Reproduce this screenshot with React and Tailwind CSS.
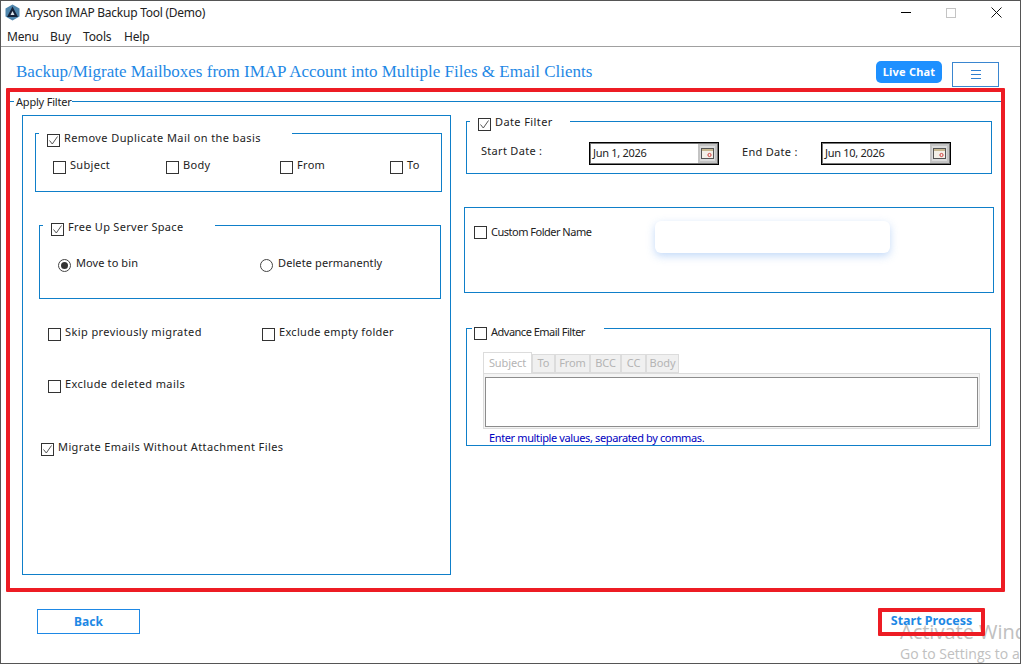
import React from "react";

const font = "font-['Noto_Sans','Open_Sans',sans-serif]";

const Box = ({ checked }) => (
  <span className="flex h-[13px] w-[13px] shrink-0 items-center justify-center border border-[#333] bg-white">
    {checked && (
      <svg width="11" height="11" viewBox="0 0 11 11" fill="none">
        <path d="M1.5 5.5 L4.3 9 L9.5 1.5" stroke="#555" strokeWidth="1" />
      </svg>
    )}
  </span>
);

const Check = ({ label, checked, className = "", labelClass = "tracking-[0.4px]" }) => (
  <div className={`flex h-[13px] items-center gap-[4px] ${className}`}>
    <Box checked={checked} />
    <span className={`mb-[6px] whitespace-nowrap text-[11px] leading-4 text-[#222] ${labelClass}`}>
      {label}
    </span>
  </div>
);

const Radio = ({ label, checked, className = "" }) => (
  <div className={`flex h-[13px] items-center gap-[5px] ${className}`}>
    <span className="flex h-[13px] w-[13px] shrink-0 items-center justify-center rounded-full border border-[#444]">
      {checked && <span className="h-[7px] w-[7px] rounded-full bg-[#333]" />}
    </span>
    <span className="mb-[6px] whitespace-nowrap text-[11px] leading-4 tracking-[0.1px] text-[#222]">
      {label}
    </span>
  </div>
);

const DateInput = ({ value }) => (
  <div className="flex h-[23px] w-[130px] items-center justify-between border border-black bg-white pl-[3px] pr-px shadow-[inset_0_0_0_1px_#777]">
    <span className="text-[11px] tracking-[-0.3px] text-[#222]">{value}</span>
    <span className="flex h-[19px] w-[19px] items-center justify-center border-2 border-[#c4c4c4] bg-[#dcdcdc]">
      <svg width="13" height="11" viewBox="0 0 13 11" fill="none">
        <rect x="0.5" y="0.5" width="12" height="10" fill="#f4f0e8" stroke="#555" />
        <rect x="1" y="1" width="11" height="2" fill="#c8b890" />
        <circle cx="8.5" cy="7" r="1.6" stroke="#d04040" />
      </svg>
    </span>
  </div>
);

const tabs = [
  ["To", "w-[23px]"],
  ["From", "w-[35px]"],
  ["BCC", "w-[31px]"],
  ["CC", "w-[25px]"],
  ["Body", "w-[33px]"],
];

const App = () => {
  return (
    <div className={`relative h-[664px] w-[1021px] overflow-hidden border border-[#555] bg-white ${font}`}>
      {/* title bar */}
      <div className="flex h-[23px] items-center pl-[3px]">
        <svg width="17" height="17" viewBox="0 0 17 17">
          <path d="M8.5 0.5 L15.5 4.5 L15.5 12.5 L8.5 16.5 L1.5 12.5 L1.5 4.5 Z" fill="#4f86ad" />
          <path d="M8.5 2.5 L14 13 L3 13 Z" fill="#14233a" />
          <path d="M8.5 7 L10.5 11 L6.5 11 Z" fill="#dfe8ef" />
        </svg>
        <span className="ml-[4px] text-[12px] tracking-[-0.25px] text-[#222]">Aryson IMAP Backup Tool (Demo)</span>
        <div className="ml-auto flex items-center">
          <span className="h-px w-[10px] bg-black" />
          <span className="ml-[35px] h-[10px] w-[10px] border border-[#c4c4c4]" />
          <svg className="ml-[35px] mr-[18px]" width="11" height="11" viewBox="0 0 11 11">
            <path d="M0.5 0.5 L10.5 10.5 M10.5 0.5 L0.5 10.5" stroke="#111" strokeWidth="1" />
          </svg>
        </div>
      </div>

      {/* menu */}
      <div className="flex h-[23px] items-center border-b border-[#a0a0a0] pl-[6px] pt-[4px] text-[12px] tracking-[-0.15px] text-[#222]">
        <span className="w-[43px]">Menu</span>
        <span className="w-[33px]">Buy</span>
        <span className="w-[41px]">Tools</span>
        <span>Help</span>
      </div>

      {/* heading */}
      <div className="flex h-[41px] items-start pl-[15px] pr-[21px]">
        <h1 className="mt-[15px] font-['Liberation_Serif',serif] text-[17px] font-normal leading-5 text-[#1e88e5]">
          Backup/Migrate Mailboxes from IMAP Account into Multiple Files &amp; Email Clients
        </h1>
        <button className="ml-auto mt-[14px] h-[22px] w-[66px] rounded-[5px] bg-[#1e90ff] text-[11px] font-bold tracking-[0.2px] text-white">
          Live Chat
        </button>
        <button className="ml-[10px] mt-[15px] flex h-[25px] w-[47px] flex-col items-center justify-center gap-[3px] border border-[#3a86d0]">
          <span className="h-px w-[10px] bg-[#2f80d0]" />
          <span className="h-px w-[10px] bg-[#2f80d0]" />
          <span className="h-px w-[10px] bg-[#2f80d0]" />
        </button>
      </div>

      {/* main area */}
      <div className="ml-[5px] h-[504px] w-[999px] rounded-[1px] border-4 border-[#ed1c24]">
        <fieldset className="border-t border-[#0f7fc9]">
          <legend className="ml-[4px] h-[18px] w-[58px] whitespace-nowrap pl-[2px] pt-[2px] text-[11px] leading-4 tracking-[-0.2px] text-[#222]">Apply Filter</legend>
          <div className="mt-[1px] flex pl-[12px]">
            {/* left column */}
            <div className="mt-[4px] h-[460px] w-[429px] border border-[#0f7fc9] pt-[3px]">
              <fieldset className="ml-[12px] w-[407px] border border-[#0f7fc9] pb-[17px]">
                <legend className="ml-[3px] flex h-[28px] w-[253px] items-center pl-[8px] pt-[15px]">
                  <Check label="Remove Duplicate Mail on the basis" checked />
                </legend>
                <div className="mt-[14px] flex pl-[17px]">
                  <Check className="w-[113px]" label="Subject" labelClass="tracking-[0.3px]" />
                  <Check className="w-[114px]" label="Body" labelClass="tracking-[0.3px]" />
                  <Check className="w-[110px]" label="From" labelClass="tracking-[0.3px]" />
                  <Check label="To" labelClass="tracking-[0.3px]" />
                </div>
              </fieldset>

              <fieldset className="ml-[16px] mt-[22px] w-[402px] border border-[#0f7fc9] pb-[26px]">
                <legend className="ml-[3px] flex h-[22px] w-[172px] items-center pl-[8px] pt-[9px]">
                  <Check label="Free Up Server Space" checked labelClass="tracking-[0.3px]" />
                </legend>
                <div className="mt-[23px] flex pl-[18px]">
                  <Radio className="w-[202px]" label="Move to bin" checked />
                  <Radio label="Delete permanently" />
                </div>
              </fieldset>

              <div className="ml-[25px] mt-[29px] flex">
                <Check className="w-[214px]" label="Skip previously migrated" />
                <Check label="Exclude empty folder" labelClass="tracking-[0.3px]" />
              </div>
              <Check className="ml-[25px] mt-[39px]" label="Exclude deleted mails" />
              <Check className="ml-[18px] mt-[50px]" label="Migrate Emails Without Attachment Files" checked />
            </div>

            {/* right column */}
            <div className="ml-[13px] w-[530px]">
              <fieldset className="ml-[2px] w-[526px] border border-[#0f7fc9] pb-[8px]">
                <legend className="ml-[3px] flex h-[20px] w-[100px] items-center pl-[8px] pt-[7px]">
                  <Check label="Date Filter" checked />
                </legend>
                <div className="mt-[11px] flex items-center pl-[14px] text-[11px] tracking-[0.3px] text-[#222]">
                  <span className="mb-1 w-[108px]">Start Date :</span>
                  <DateInput value="Jun 1, 2026" />
                  <span className="mb-[2px] ml-[23px] w-[79px]">End Date :</span>
                  <DateInput value="Jun 10, 2026" />
                </div>
              </fieldset>

              <div className="mt-[33px] flex h-[86px] w-[530px] items-start border border-[#0f7fc9] pl-[9px]">
                <Check className="mt-[18px] w-[181px]" label="Custom Folder Name" labelClass="translate-y-[2px] tracking-[-0.5px]" />
                <div className="mt-[13px] h-[32px] w-[235px] rounded-[6px] bg-white shadow-[0_3px_8px_rgba(120,170,240,0.45)]" />
              </div>

              <fieldset className="ml-[2px] mt-[23px] w-[525px] border border-[#0f7fc9]">
                <legend className="ml-[5px] flex h-[24px] w-[132px] items-center pl-[2px] pt-[11px]">
                  <Check label="Advance Email Filter" labelClass="translate-y-[1px] tracking-[-0.5px]" />
                </legend>
                <div className="ml-[16px] mt-[12px] text-[11px] tracking-[-0.1px]">
                  <div className="flex items-end text-[#b4b4b4]">
                    <span className="flex h-[21px] w-[49px] items-center justify-center border border-b-0 border-[#dcdcdc] bg-white">Subject</span>
                    {tabs.map(([name, w]) => (
                      <span key={name} className={`flex h-[19px] items-center justify-center border border-[#dcdcdc] bg-[#f0f0f0] ${w}`}>
                        {name}
                      </span>
                    ))}
                  </div>
                  <div className="h-[56px] w-[497px] border border-[#dcdcdc] bg-[#f4f4f4] px-[1px] pt-[3px]">
                    <div className="h-[50px] w-[493px] border border-[#8c8c8c] bg-white" />
                  </div>
                </div>
                <p className="ml-[22px] mt-[1px] h-[15px] text-[11px] leading-4 tracking-[-0.37px] text-[#0000c0]">
                  Enter multiple values, separated by commas.
                </p>
              </fieldset>
            </div>
          </div>
        </fieldset>
      </div>

      {/* bottom buttons */}
      <div className="mt-[16px] flex items-start pl-[36px]">
        <button className="mt-px h-[25px] w-[103px] border border-[#1e88e5] text-[12px] font-bold text-[#1e88e5]">
          Back
        </button>
        <button className="relative z-10 ml-[738px] h-[28px] w-[107px] rounded-[1px] border-4 border-[#ed1c24] pb-[2px] text-[12.5px] font-bold text-[#1e88e5]">
          Start Process
        </button>
      </div>

      {/* windows watermark */}
      <div className="pointer-events-none absolute left-[899px] top-[619px] whitespace-nowrap font-['Open_Sans',sans-serif] text-[#c0c0c0]">
        <div className="text-[20px] leading-6">Activate Windows</div>
        <div className="text-[14px] leading-5">Go to Settings to activate Windows.</div>
      </div>
    </div>
  );
};

export default App;
